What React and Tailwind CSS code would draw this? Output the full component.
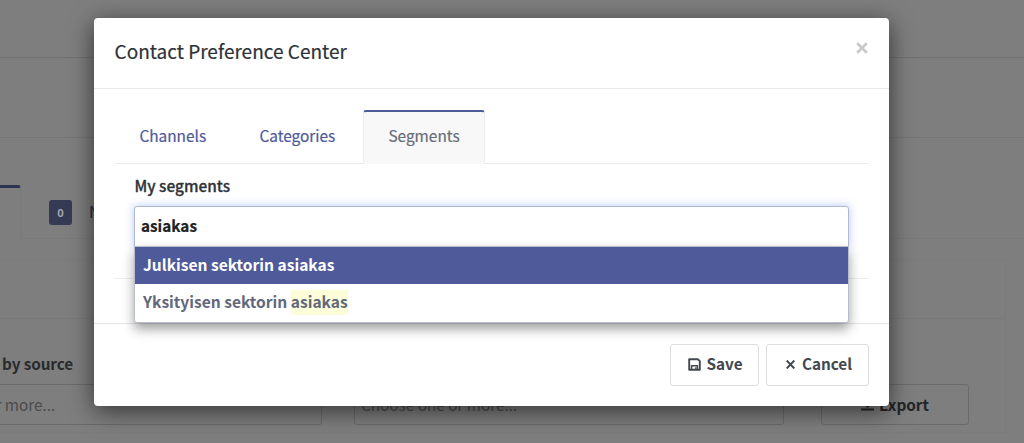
const tabs = [
  { label: "Channels", width: "w-[120px]" },
  { label: "Categories", width: "w-[129px]" },
];

function SaveIcon() {
  return (
    <svg className="mt-[2px] mr-[5px] size-[13px] shrink-0" viewBox="0 0 13 13" fill="none" stroke="#43484f" strokeWidth="1.900">
      <path d="M1.200 1.200h8.600L11.800 3.200v8.600H1.200z" strokeLinejoin="round" />
      <path d="M3.600 12V7.800h5.800v4" strokeWidth="1.500" />
      <path d="M7.800 9.300v2.200" strokeWidth="1.200" />
    </svg>
  );
}

function CloseIcon() {
  return (
    <svg className="mt-[2px] mr-[7px] size-[9px] shrink-0" viewBox="0 0 9 9" fill="none" stroke="#43484f" strokeWidth="1.900">
      <path d="M.7.5l7.600 8M8.300.5L.7 8.500" />
    </svg>
  );
}

function Backdrop() {
  return (
    <div className="flex h-full flex-col">
      <div className="h-[58px] shrink-0 border-b border-[#727272]" />
      <div className="h-[80px] shrink-0 border-b border-[#767676]" />
      <div className="flex h-[101px] shrink-0 items-end">
        <div className="h-[54px] w-[21px] shrink-0 rounded-tr-[3px] border-t-[3px] border-r border-t-[#2d3350] border-r-[#7a7a7a]" />
        <div className="flex h-[54px] flex-1 items-center border-b border-[#7a7a7a] pl-[28px]">
          <span className="mt-[2px] flex h-[25px] w-[23px] items-center justify-center rounded-[3px] bg-[#363b55] text-[11px] font-bold text-[#a5a7b0]">
            0
          </span>
          <span className="ml-[17px] text-[15.3px] font-medium text-[#2d3350]">Name</span>
        </div>
      </div>
      <div className="mt-[21px] mr-[18px] flex h-[173px] shrink-0 flex-col border-t border-r border-b border-[#7b7b7b]">
        <div className="h-[58px] shrink-0 border-b border-[#797979]" />
        <div className="mt-[32px] ml-[2px] h-[24px] text-[15.3px] leading-[24px] font-bold tracking-[-0.1px] text-[#292b2e]">by source</div>
        <div className="mt-[9px] flex h-[41px] shrink-0 text-[15.3px]">
          <div className="flex w-[322px] shrink-0 items-center rounded-r-[3px] border border-l-0 border-[#6b6b6b] text-[#4c4c4c]">
            <span className="-ml-[4.500px] whitespace-nowrap">r more...</span>
          </div>
          <div className="ml-[32px] flex w-[430px] shrink-0 items-center rounded-[3px] border border-[#6b6b6b] pl-[6px] text-[#4c4c4c]">
            Choose one or more...
          </div>
          <div className="ml-[37px] flex w-[148px] shrink-0 items-center justify-center rounded-[3px] border border-[#6b6b6b] font-bold text-[#222427]">
            <svg className="mr-[5px] size-[13px]" viewBox="0 0 13 13" fill="none" stroke="#222427" strokeWidth="2">
              <path d="M6.500 0v8M3 5l3.500 3.500L10 5M0 11.500h13" />
            </svg>
            Export
          </div>
        </div>
      </div>
    </div>
  );
}

function SegmentSelect() {
  return (
    <div className="relative z-10 h-[41px] w-[715px] rounded-t-[3px] border border-[#b3b8d3] bg-white px-[6px] shadow-[0_0_9px_rgba(102,145,233,0.5)]">
      <div className="h-[39px] text-[15.3px] leading-[36px] font-bold text-[#202124] [-webkit-text-stroke:0.2px]">asiakas</div>
      <ul className="absolute top-[39px] -left-px w-[715px] rounded-b-[3px] border border-[#b9bccb] bg-white text-[15.55px] font-bold shadow-[0_6px_12px_rgba(0,0,0,0.38)]">
        <li className="h-[37px] bg-[#4e5a9a] pl-[8px] leading-[34px] text-white">Julkisen sektorin asiakas</li>
        <li className="h-[38px] pl-[8px] leading-[34px] text-[#62687c]">
          Yksityisen sektorin <span className="inline-block h-[25px] bg-[#fcfdd9] leading-[23px]">asiakas</span>
        </li>
      </ul>
    </div>
  );
}

function PreferenceDialog() {
  return (
    <div className="absolute top-[18px] left-[94px] flex h-[388px] w-[795px] flex-col rounded-[4px] bg-white shadow-[0_5px_24px_rgba(0,0,0,0.6)]">
      <div className="flex h-[71px] shrink-0 justify-between border-b border-[#e9e9eb] pr-[21px] pl-[20.5px]">
        <h1 className="mt-[18px] text-[19.050px] leading-[30px] text-[#2f3238] [-webkit-text-stroke:0.2px]">Contact Preference Center</h1>
        <svg className="mt-[24px] size-[12px]" viewBox="0 0 12 12" stroke="#c9c9c9" strokeWidth="2.800">
          <path d="M1.200 1.200l9.600 9.600M10.800 1.200l-9.600 9.600" />
        </svg>
      </div>
      <div className="h-[235px] shrink-0 border-b border-[#e5e5e8] px-[20px] pt-[20px]">
        <div className="flex h-[55px] text-[15.4px] [-webkit-text-stroke:0.2px]">
          {tabs.map((tab) => (
            <div key={tab.label} className={`${tab.width} border-b border-[#ececee] pl-[25.4px] leading-[53px] text-[#4e5a9a]`}>
              {tab.label}
            </div>
          ))}
          <div className="mt-px w-[122px] rounded-t-[3px] border-x border-t-[2px] border-x-[#eeeeef] border-t-[#4e5a9a] bg-[#f8f8f8] pl-[24.4px] leading-[47px] text-[#686d78]">
            Segments
          </div>
          <div className="flex-1 border-b border-[#ececee]" />
        </div>
        <div className="h-[115px] border-b border-[#ececee] px-[20px]">
          <div className="h-[42px] pt-[9px] pl-[0.5px] text-[15.4px] leading-[24px] font-medium text-[#303339] [-webkit-text-stroke:0.3px]">My segments</div>
          <SegmentSelect />
        </div>
      </div>
      <div className="flex flex-1 justify-end gap-[7px] pt-[20px] pr-[20px] text-[15.3px] font-bold text-[#43484f]">
        <button className="flex h-[42px] w-[89px] items-center justify-center rounded-[3px] border border-[#dddde0] pb-[3px] pl-[2px]">
          <SaveIcon />
          Save
        </button>
        <button className="flex h-[42px] w-[103px] items-center justify-center rounded-[3px] border border-[#dddde0] pb-[3px] pl-[3px]">
          <CloseIcon />
          Cancel
        </button>
      </div>
    </div>
  );
}

export default function App() {
  return (
    <div className="relative h-[443px] w-[1024px] overflow-hidden bg-[#7e7e7e] font-['Noto_Sans_CJK_SC','Noto_Sans',sans-serif]">
      <Backdrop />
      <PreferenceDialog />
    </div>
  );
}
